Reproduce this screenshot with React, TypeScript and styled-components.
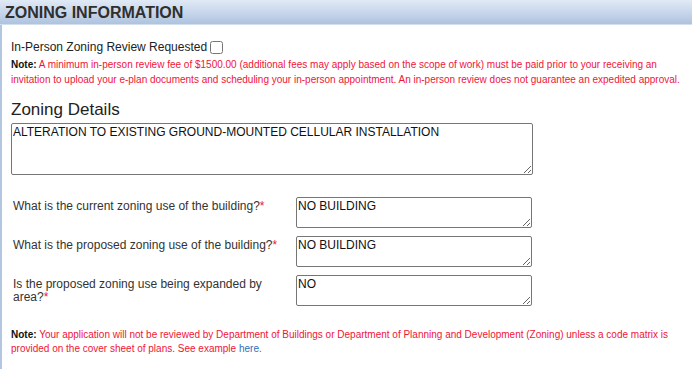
import React from 'react'
import styled, { createGlobalStyle } from 'styled-components'

const GlobalStyle = createGlobalStyle`
  html, body {
    margin: 0;
    padding: 0;
    background: #fff;
  }
  body {
    font-family: "Liberation Sans", Arial, sans-serif;
    color: #222;
  }
`

const Panel = styled.section`
  width: 692px;
  height: 369px;
  overflow: hidden;
  box-sizing: border-box;
`

const Header = styled.h2`
  margin: 0;
  height: 24px;
  line-height: 25px;
  padding-left: 5px;
  font-size: 16px;
  font-weight: bold;
  color: #2f2f2f;
  background: linear-gradient(to bottom, #e0e9f6 0%, #c6d5ea 55%, #afc3de 100%);
  border-bottom: 1px solid #d3deee;
`

const Body = styled.div`
  border-left: 2px solid #b3c6e0;
  padding: 15px 0 20px 9px;
  height: 100%;
  box-sizing: border-box;
`

const CheckRow = styled.label`
  display: flex;
  align-items: center;
  font-size: 12px;
  line-height: 15px;
  color: #222;

  input {
    margin: 0 0 0 3px;
    width: 13px;
    height: 13px;
  }
`

const Note = styled.p<{ $spaced?: boolean }>`
  margin: ${p => (p.$spaced ? '2px' : '0')} 0 0;
  font-size: 10px;
  line-height: ${p => (p.$spaced ? '15px' : '14px')};
  color: #f01438;

  b {
    color: #111;
  }

  a {
    color: #2f6fb7;
    text-decoration: none;
  }
`

const SectionTitle = styled.h3`
  margin: 12px 0 3px;
  font-size: 17px;
  font-weight: normal;
  line-height: 21px;
  color: #222;
`

const Area = styled.textarea<{ $w: number; $h: number }>`
  display: block;
  width: ${p => p.$w}px;
  height: ${p => p.$h}px;
  box-sizing: border-box;
  margin: 0;
  padding: 1px 1px;
  font-family: "Liberation Sans", Arial, sans-serif;
  font-size: 12px;
  line-height: 14px;
  color: #111;
  border: 1px solid #767676;
  border-radius: 2px;
  resize: vertical;
`

const Questions = styled.div`
  display: flex;
  flex-direction: column;
  gap: 8px;
  margin: 22px 0 22px;
`

const QuestionRow = styled.div`
  display: grid;
  grid-template-columns: 283px 236px;
  align-items: start;
  padding-left: 2px;
`

const QuestionLabel = styled.span`
  font-size: 12px;
  line-height: 13px;
  color: #333;
  padding-top: 3px;
  padding-right: 14px;

  em {
    font-style: normal;
    color: #f01438;
  }
`

const questions = [
  { label: 'What is the current zoning use of the building?', value: 'NO BUILDING' },
  { label: 'What is the proposed zoning use of the building?', value: 'NO BUILDING' },
  { label: 'Is the proposed zoning use being expanded by area?', value: 'NO' },
]

const App: React.FC = () => {
  return (
    <Panel>
      <GlobalStyle />
      <Header>ZONING INFORMATION</Header>
      <Body>
        <CheckRow>
          In-Person Zoning Review Requested
          <input type="checkbox" />
        </CheckRow>
        <Note $spaced>
          <b>Note:</b> A minimum in-person review fee of $1500.00 (additional fees may apply based on the scope of work) must be paid prior to your receiving an invitation to upload your e-plan documents and scheduling your in-person appointment. An in-person review does not guarantee an expedited approval.
        </Note>

        <SectionTitle>Zoning Details</SectionTitle>
        <Area
          $w={522}
          $h={52}
          defaultValue="ALTERATION TO EXISTING GROUND-MOUNTED CELLULAR INSTALLATION"
        />

        <Questions>
          {questions.map((q, idx) => (
            <QuestionRow key={idx}>
              <QuestionLabel>
                {q.label}
                <em>*</em>
              </QuestionLabel>
              <Area $w={236} $h={31} defaultValue={q.value} />
            </QuestionRow>
          ))}
        </Questions>

        <Note>
          <b>Note:</b> Your application will not be reviewed by Department of Buildings or Department of Planning and Development (Zoning) unless a code matrix is provided on the cover sheet of plans. See example <a href="#">here</a>.
        </Note>
      </Body>
    </Panel>
  )
}

export default App
